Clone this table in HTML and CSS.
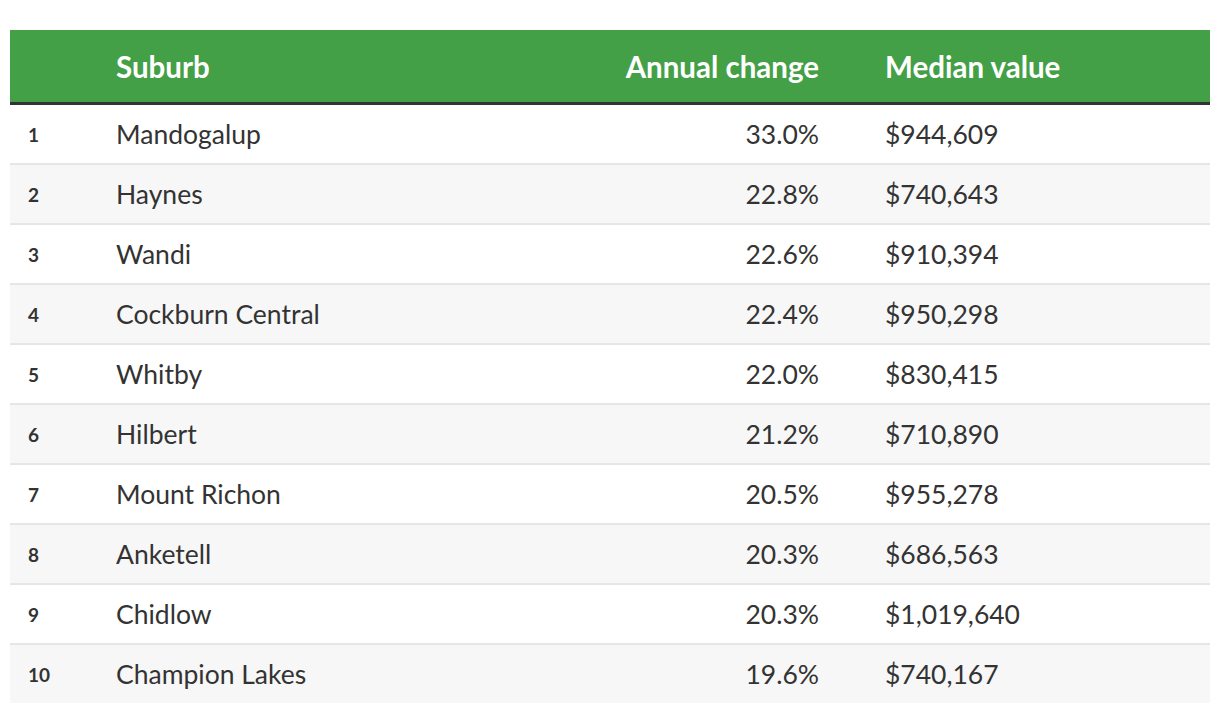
FILE: index.html
```html
<!DOCTYPE html>
<html>
<head>
<meta charset="utf-8">
<link rel="stylesheet" href="styles.css">
</head>
<body>
<table class="ranking">
  <thead>
    <tr>
      <th class="c-rank"></th>
      <th class="c-suburb">Suburb</th>
      <th class="c-change">Annual change</th>
      <th class="c-value">Median value</th>
    </tr>
  </thead>
  <tbody>
    <tr><td class="c-rank">1</td><td class="c-suburb">Mandogalup</td><td class="c-change">33.0%</td><td class="c-value">$944,609</td></tr>
    <tr><td class="c-rank">2</td><td class="c-suburb">Haynes</td><td class="c-change">22.8%</td><td class="c-value">$740,643</td></tr>
    <tr><td class="c-rank">3</td><td class="c-suburb">Wandi</td><td class="c-change">22.6%</td><td class="c-value">$910,394</td></tr>
    <tr><td class="c-rank">4</td><td class="c-suburb">Cockburn Central</td><td class="c-change">22.4%</td><td class="c-value">$950,298</td></tr>
    <tr><td class="c-rank">5</td><td class="c-suburb">Whitby</td><td class="c-change">22.0%</td><td class="c-value">$830,415</td></tr>
    <tr><td class="c-rank">6</td><td class="c-suburb">Hilbert</td><td class="c-change">21.2%</td><td class="c-value">$710,890</td></tr>
    <tr><td class="c-rank">7</td><td class="c-suburb">Mount Richon</td><td class="c-change">20.5%</td><td class="c-value">$955,278</td></tr>
    <tr><td class="c-rank">8</td><td class="c-suburb">Anketell</td><td class="c-change">20.3%</td><td class="c-value">$686,563</td></tr>
    <tr><td class="c-rank">9</td><td class="c-suburb">Chidlow</td><td class="c-change">20.3%</td><td class="c-value">$1,019,640</td></tr>
    <tr><td class="c-rank">10</td><td class="c-suburb">Champion Lakes</td><td class="c-change">19.6%</td><td class="c-value">$740,167</td></tr>
  </tbody>
</table>
</body>
</html>
```
FILE: styles.css
```css
html, body {
  margin: 0;
  padding: 0;
  background: #ffffff;
}
body {
  padding: 30px 10px 0 10px;
  font-family: "Lato", "Liberation Sans", sans-serif;
  color: #333333;
}
.ranking {
  width: 1200px;
  border-collapse: collapse;
  table-layout: fixed;
}
.ranking thead th {
  background: #43a047;
  color: #ffffff;
  font-weight: 700;
  font-size: 29.5px;
  height: 72px;
  padding: 0;
  border-bottom: 3px solid #333333;
  vertical-align: middle;
}
.ranking tbody td {
  height: 58px;
  padding: 0;
  font-size: 26.5px;
  vertical-align: middle;
  border-bottom: 2px solid #e6e6e6;
}
.ranking tbody tr:nth-child(even) td {
  background: #f7f7f7;
}
.ranking tbody tr:last-child td {
  border-bottom: none;
}
.c-rank {
  width: 106px;
  padding-left: 18px !important;
  text-align: left;
  box-sizing: border-box;
}
.ranking tbody td.c-rank {
  font-size: 19px;
  font-weight: 700;
}
.c-suburb {
  text-align: left;
}
.c-change {
  width: 310px;
  text-align: right;
}
.c-value {
  width: 391px;
  padding-left: 66px !important;
  text-align: left;
  box-sizing: border-box;
}
```
